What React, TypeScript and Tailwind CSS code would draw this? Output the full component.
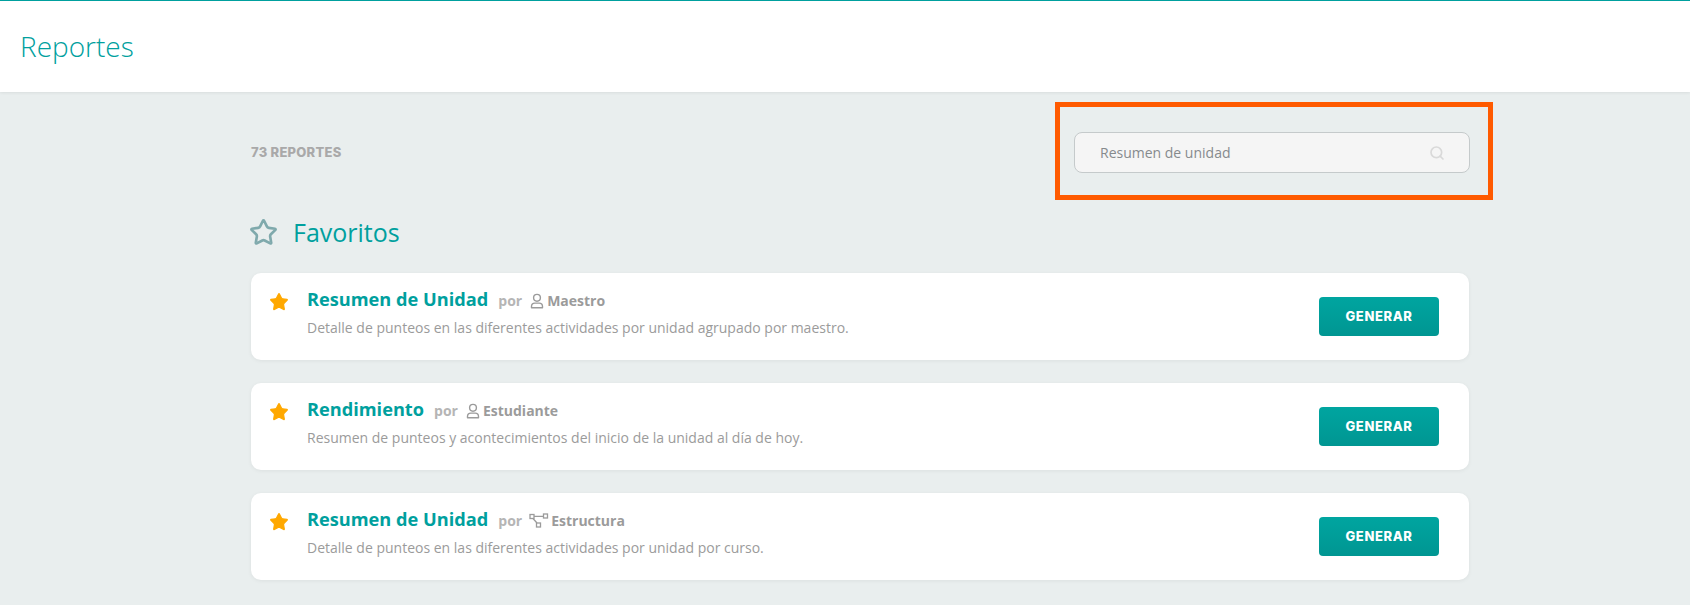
import { Search, Star } from "lucide-react";
import type { ReactNode } from "react";

function StructureIcon() {
  return (
    <svg width="20" height="16" viewBox="0 0 20 16" fill="none" stroke="#9b9b9b" strokeWidth="1.3" className="shrink-0">
      <rect x="1" y="1.5" width="4" height="4" />
      <rect x="14.5" y="1" width="4" height="4" />
      <rect x="7.5" y="10" width="4" height="4" />
      <path d="M5 3.3h9.5M4 5.5l4 4.5" />
    </svg>
  );
}

function PersonIcon() {
  return (
    <svg width="16" height="16" viewBox="0 0 16 16" fill="none" stroke="#9b9b9b" strokeWidth="1.4" className="shrink-0">
      <circle cx="8" cy="4.8" r="3.4" />
      <path d="M2.5 14.7v-1.2a3.4 3.4 0 0 1 3.4-3.4h4.2a3.4 3.4 0 0 1 3.4 3.4v1.2z" strokeLinejoin="round" />
    </svg>
  );
}

function Card({ title, entity, icon, gap, desc }: { title: string; entity: string; icon: ReactNode; gap: string; desc: string }) {
  return (
    <div className="flex h-[87px] items-start justify-between rounded-[10px] bg-white pl-[18px] pr-[30px] shadow-[0_1px_4px_rgba(0,0,0,0.06)]">
      <div className="flex">
        <Star size={20} fill="#ffa800" stroke="#ffa800" strokeWidth={1.5} className="mt-[19px] shrink-0" />
        <div className="ml-[18px] pt-[13px]">
          <div className="flex h-[27px] items-center">
            <span className="text-[18.2px] font-bold leading-[27px] text-[#00a09e]">{title}</span>
            <span className="ml-[10px] mt-[2px] text-[14px] font-bold text-[#b5b5b5]">por</span>
            <span className={`ml-[7px] mt-[2px] flex items-center ${gap} text-[14px] font-bold text-[#9b9b9b]`}>
              {icon}
              {entity}
            </span>
          </div>
          <p className="mt-[4px] text-[14px] leading-[22px] text-[#9b9b9b]">{desc}</p>
        </div>
      </div>
      <button className="mt-[24px] h-[39px] w-[120px] rounded-[4px] bg-gradient-to-b from-[#00a5a0] to-[#009692] font-['Inter',sans-serif] text-[13px] font-extrabold tracking-[0.6px] text-white">
        GENERAR
      </button>
    </div>
  );
}

export default function App() {
  return (
    <div className="min-h-[605px] overflow-hidden bg-[#e9eeee] font-['Open_Sans',sans-serif]">
      <header className="flex h-[92px] items-center border-t border-[#00a09e] bg-white pb-[2px] pl-[20px] shadow-[0_1px_3px_rgba(0,0,0,0.07)]">
        <h1 className="text-[28px] font-light leading-none text-[#00a09e]">Reportes</h1>
      </header>
      <main className="ml-[251px] w-[1218px]">
        <div className="flex h-[81px] items-end justify-between">
          <span className="mb-[11px] font-['Inter',sans-serif] text-[13px] font-extrabold tracking-[0.25px] text-[#a9a9a9]">73 REPORTES</span>
          <div className="relative -mr-[1px] w-[396px]">
            <div className="flex h-[41px] items-center justify-between rounded-[8px] border border-[#c5cacb] bg-[#f5f5f5] pl-[25px] pr-[24px] text-[14px] text-[#868a8d]">
              <span>Resumen de unidad</span>
              <Search size={16} stroke="#d9d9d9" strokeWidth={2.5} />
            </div>
            <div className="absolute -left-[19px] -right-[23px] -top-[30px] h-[98px] border-[5px] border-[#ff5a00]" />
          </div>
        </div>
        <div className="mt-[41px] flex h-[36px] items-center">
          <Star size={29} stroke="#7fa9ac" strokeWidth={2.2} className="-ml-[2px]" />
          <h2 className="ml-[15px] text-[25px] leading-none text-[#00a09e]">Favoritos</h2>
        </div>
        <div className="mt-[23px] flex flex-col gap-[23px]">
          <Card
            title="Resumen de Unidad"
            entity="Maestro"
            gap="gap-[2px]"
            icon={<PersonIcon />}
            desc="Detalle de punteos en las diferentes actividades por unidad agrupado por maestro."
          />
          <Card
            title="Rendimiento"
            entity="Estudiante"
            gap="gap-[2px]"
            icon={<PersonIcon />}
            desc="Resumen de punteos y acontecimientos del inicio de la unidad al día de hoy."
          />
          <Card
            title="Resumen de Unidad"
            entity="Estructura"
            gap="gap-[2px]"
            icon={<StructureIcon />}
            desc="Detalle de punteos en las diferentes actividades por unidad por curso."
          />
        </div>
      </main>
    </div>
  );
}
